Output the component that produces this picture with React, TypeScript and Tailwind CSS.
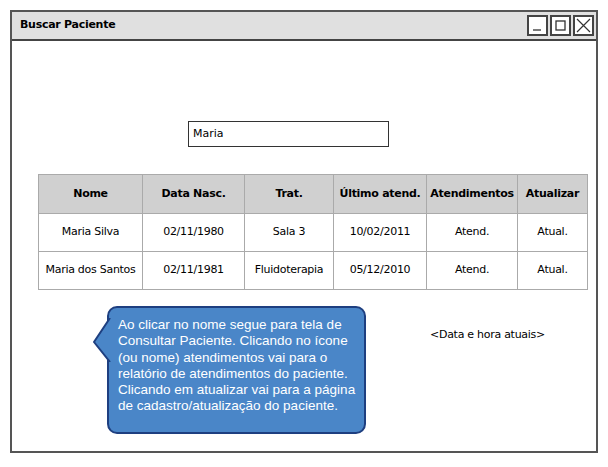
import React from 'react';

const sketch = { fontFamily: '"Comic Sans MS", "DejaVu Sans", sans-serif' };

const columns = [
  { label: 'Nome', w: 'w-[104px]' },
  { label: 'Data Nasc.', w: 'w-[102px]' },
  { label: 'Trat.', w: 'w-[89px]' },
  { label: 'Último atend.', w: 'w-[93px]' },
  { label: 'Atendimentos', w: 'w-[91px]' },
  { label: 'Atualizar', w: 'w-[70px]' },
];

const rows = [
  ['Maria Silva', '02/11/1980', 'Sala 3', '10/02/2011', 'Atend.', 'Atual.'],
  ['Maria dos Santos', '02/11/1981', 'Fluidoterapia', '05/12/2010', 'Atend.', 'Atual.'],
];

const WinButton: React.FC<{ children: React.ReactNode }> = ({ children }) => (
  <div className="w-[21px] h-[21px] border-2 border-[#444] bg-white flex items-center justify-center">
    {children}
  </div>
);

export default function App() {
  return (
    <div className="w-[608px] h-[467px] bg-white p-[10px] pb-[14px]" style={sketch}>
      <div className="h-full border-2 border-[#555] flex flex-col">
        {/* barra de título */}
        <div className="h-[29px] bg-[#e0e0e0] border-b-2 border-[#444] flex items-center pl-[8px] pr-[2px]">
          <span className="text-[11px] font-bold text-black tracking-tight">Buscar Paciente</span>
          <div className="ml-auto flex gap-[2px]">
            <WinButton>
              <svg width="13" height="13" viewBox="0 0 13 13">
                <path d="M2 11 H10" stroke="#333" strokeWidth="1.3" fill="none" />
              </svg>
            </WinButton>
            <WinButton>
              <svg width="13" height="13" viewBox="0 0 13 13">
                <rect x="2" y="2" width="9" height="9" stroke="#333" strokeWidth="1.3" fill="none" />
              </svg>
            </WinButton>
            <WinButton>
              <svg width="15" height="15" viewBox="0 0 15 15">
                <path d="M1 1 L14 14 M14 1 L1 14" stroke="#333" strokeWidth="1.2" fill="none" />
              </svg>
            </WinButton>
          </div>
        </div>

        <div className="flex-1 flex flex-col">
          <div className="mt-[80px] ml-[176px] w-[201px] h-[26px] border-[1.5px] border-[#333] flex items-center px-[4px]">
            <span className="text-[11px] text-black">Maria</span>
          </div>

          <table className="mt-[27px] ml-[26px] w-[549px] border-collapse table-fixed text-[11px] text-black">
            <thead>
              <tr className="bg-[#d0d0d0] h-[39px]">
                {columns.map((c) => (
                  <th key={c.label} className={`${c.w} border border-[#aaa] font-bold tracking-tight`}>
                    {c.label}
                  </th>
                ))}
              </tr>
            </thead>
            <tbody>
              {rows.map((r, i) => (
                <tr key={i} className="h-[38px]">
                  {r.map((cell, j) => (
                    <td key={j} className="border border-[#aaa] text-center whitespace-nowrap tracking-tight">
                      {cell}
                    </td>
                  ))}
                </tr>
              ))}
            </tbody>
          </table>

          <div className="mt-[16px] flex">
            {/* balão de comentário */}
            <div className="relative ml-[95px] w-[259px] h-[128px] bg-[#4a86c8] border-2 border-[#1e3f80] rounded-[10px] pl-[9px] pr-[6px] pt-[9px]">
              <svg className="absolute left-[-16px] top-[10px]" width="18" height="44" viewBox="0 0 18 44">
                <path d="M17 0 L1 24 L17 44 Z" fill="#4a86c8" />
                <path d="M17 0 L1 24 L17 44" stroke="#1e3f80" strokeWidth="2" fill="none" />
              </svg>
              <p
                className="text-[13.5px] leading-[16.3px] text-white whitespace-nowrap"
                style={{ fontFamily: '"Liberation Sans", Arial, sans-serif' }}
              >
                Ao clicar no nome segue para tela de
                <br />
                Consultar Paciente. Clicando no ícone
                <br />
                (ou nome) atendimentos vai para o
                <br />
                relatório de atendimentos do paciente.
                <br />
                Clicando em atualizar vai para a página
                <br />
                de cadastro/atualização do paciente.
              </p>
            </div>
            <div className="ml-[64px] mt-[21px] text-[11px] text-black tracking-tight">&lt;Data e hora atuais&gt;</div>
          </div>
        </div>
      </div>
    </div>
  );
}
